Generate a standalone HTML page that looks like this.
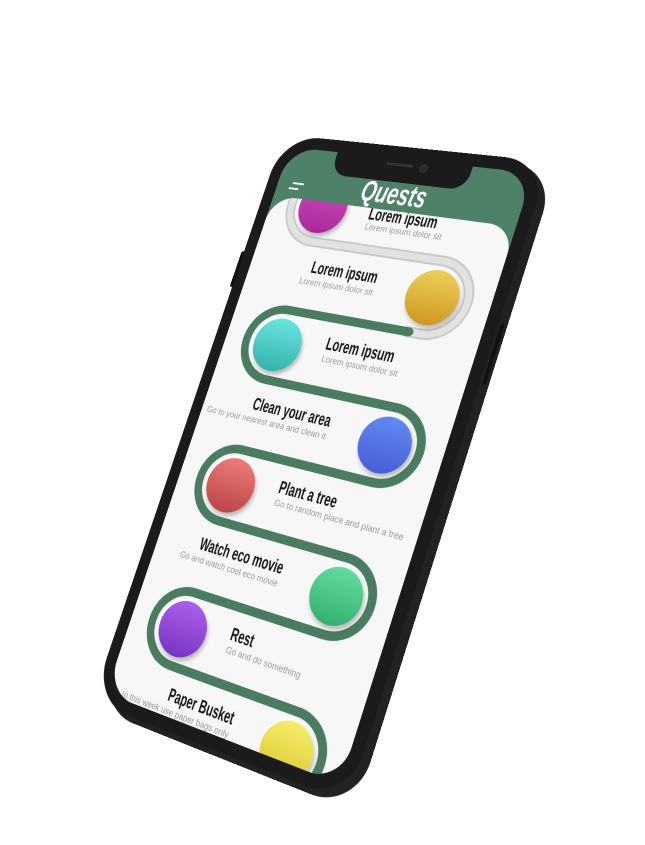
<!DOCTYPE html>
<html><head><meta charset="utf-8"><style>
html,body{margin:0;padding:0;background:#fff;width:645px;height:845px;overflow:hidden}
#w{position:absolute;left:0;top:0;width:276px;height:596px;transform-origin:0 0;
transform:matrix3d(0.68761,0.03163,0,-0.00036178,-0.31653,0.86507,0,-0.00007364,0,0,1,0,290,147,0,1)}
.side{position:absolute;left:-4px;top:-8px;width:302px;height:622px;border-radius:46px;background:#222}
.body{position:absolute;left:-13px;top:-13px;width:302px;height:622px;border-radius:46px;background:#1b1b1b}
.btn{position:absolute;background:#111;border-radius:2px}
.screen{position:absolute;left:0;top:0;width:276px;height:596px;border-radius:34px;background:#4e8268;overflow:hidden}
.notch{position:absolute;left:59px;top:-2px;width:154px;height:27px;background:#1b1b1b;border-radius:0 0 18px 18px}
.spk{position:absolute;left:60px;top:7px;width:30px;height:3px;border-radius:2px;background:#333}
.cam{position:absolute;left:98px;top:5px;width:7px;height:7px;border-radius:50%;background:#2a2a2a;border:1px solid #3a3a3a}
.title{position:absolute;left:0;width:276px;top:20px;text-align:center;color:#fff;font:italic bold 31px "Liberation Sans",sans-serif;transform:scaleX(0.7);transform-origin:138px 0}
.hb{position:absolute;height:2px;background:#fff;border-radius:1px}
.panel{position:absolute;left:0;top:55px;width:276px;height:541px;background:#f7f7f7;border-radius:28px 28px 0 0;overflow:hidden}
svg{position:absolute;left:0;top:-55px}
.c{position:absolute;width:56px;height:56px;border-radius:50%;box-shadow:2px 3px 4px rgba(0,0,0,.28),0 0 0 2px rgba(255,255,255,.7)}
.t{position:absolute;font:bold 18px "Liberation Sans",sans-serif;color:#151515;white-space:nowrap;transform:scaleX(0.68)}
.s{position:absolute;font:9px "Liberation Sans",sans-serif;color:#9a9a9a;white-space:nowrap}
.L{left:118px;text-align:left;transform-origin:0 0}
.R{right:126px;text-align:right;transform-origin:100% 0}
.s.L,.s.R{transform:none}
</style></head><body>
<div id="w">
  <div class="side"></div>
  <div class="body"></div>
  <div class="btn" style="left:291px;top:150px;width:4px;height:60px"></div>
  <div class="btn" style="left:-16px;top:120px;width:4px;height:40px"></div>
  <div class="screen">
    <div class="hb" style="left:18px;top:38px;width:14px"></div>
    <div class="hb" style="left:15px;top:44px;width:12px"></div>
    <div class="title">Quests</div>
    <div class="panel">
      <svg width="276" height="700" viewBox="0 0 276 700">
        <path d="M250,23.5 L63,23.5 A37.5 37.5 0 0 0 63,98.5 L214,98.5 A37.5 37.5 0 0 1 214,173.5 L200,173.5" fill="none" stroke="#c9c9c9" stroke-width="11" stroke-linecap="round"/>
        <path d="M250,23.5 L63,23.5 A37.5 37.5 0 0 0 63,98.5 L214,98.5 A37.5 37.5 0 0 1 214,173.5 L200,173.5" fill="none" stroke="#e2e2e2" stroke-width="7" stroke-linecap="round"/>
        <path d="M202,173.5 L63,173.5 A37.5 37.5 0 0 0 63,248.5 L214,248.5 A37.5 37.5 0 0 1 214,323.5 L63,323.5 A37.5 37.5 0 0 0 63,398.5 L214,398.5 A37.5 37.5 0 0 1 214,473.5 L63,473.5 A37.5 37.5 0 0 0 63,548.5 L214,548.5 A37.5 37.5 0 0 1 214,623.5 L200,623.5" fill="none" stroke="#4a7c62" stroke-width="9" stroke-linecap="round"/>
      </svg>
      <div class="c" style="left:35px;top:-22px;background:linear-gradient(#d24cc0,#a8289a)"></div>
      <div class="t L" style="top:-4px">Lorem ipsum</div>
      <div class="s L" style="top:15px">Lorem ipsum dolor sit</div>

      <div class="c" style="left:186px;top:53px;background:linear-gradient(#ecd05a,#cf9820)"></div>
      <div class="t R" style="top:60px">Lorem ipsum</div>
      <div class="s R" style="top:81px">Lorem ipsum dolor sit</div>

      <div class="c" style="left:35px;top:128px;background:linear-gradient(#66e6df,#36b0aa)"></div>
      <div class="t L" style="top:135px">Lorem ipsum</div>
      <div class="s L" style="top:156px">Lorem ipsum dolor sit</div>

      <div class="c" style="left:186px;top:203px;background:linear-gradient(#6388f2,#4660d6)"></div>
      <div class="t R" style="top:210px">Clean your area</div>
      <div class="s R" style="top:231px">Go to your nearest area and clean it</div>

      <div class="c" style="left:35px;top:278px;background:linear-gradient(#ec7a78,#bc4648)"></div>
      <div class="t L" style="top:285px">Plant a tree</div>
      <div class="s L" style="top:306px">Go to random place and plant a tree</div>

      <div class="c" style="left:186px;top:353px;background:linear-gradient(#62dc9e,#34b06e)"></div>
      <div class="t R" style="top:360px">Watch eco movie</div>
      <div class="s R" style="top:381px">Go and watch cool eco movie</div>

      <div class="c" style="left:35px;top:428px;background:linear-gradient(#ac60ec,#7a34c2)"></div>
      <div class="t L" style="top:435px">Rest</div>
      <div class="s L" style="top:456px">Go and do something</div>

      <div class="c" style="left:186px;top:503px;background:linear-gradient(#f4ec6a,#dcc832)"></div>
      <div class="t R" style="top:510px">Paper Busket</div>
      <div class="s R" style="top:531px">In this week use paper bags only</div>
    </div>
    <div class="notch"><div class="spk"></div><div class="cam"></div></div>
  </div>
</div>
</body></html>
